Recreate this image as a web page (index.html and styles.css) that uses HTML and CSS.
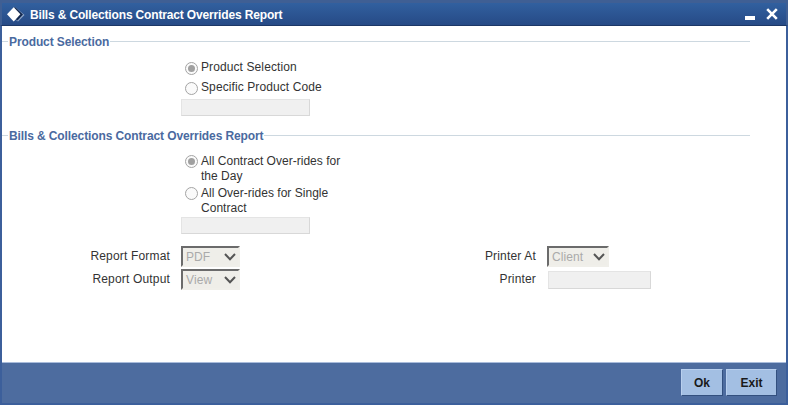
FILE: index.html
```html
<!DOCTYPE html>
<html lang="en">
<head>
<meta charset="utf-8">
<title>Bills &amp; Collections Contract Overrides Report</title>
<link rel="stylesheet" href="styles.css">
</head>
<body>
<div class="window">
  <header class="titlebar">
    <svg class="logo" width="18" height="16" viewBox="0 0 18 16"><path d="M8 0 17.5 8 11 14.5 1 7Z" fill="#8fa6c8"/><path d="M8 0 16 7.5 10.5 13.5 1 7Z" fill="#12284f"/><path d="M6.7 0.3 13.4 7.3 6.7 14.4 0 7.3Z" fill="#fff"/></svg>
    <h1 class="title">Bills &amp; Collections Contract Overrides Report</h1>
    <div class="winctl">
      <svg width="10" height="4" viewBox="0 0 10 4"><rect width="10" height="4" fill="#fff"/></svg>
      <svg width="12" height="12" viewBox="0 0 12 12"><path d="M1.2 1.2 10.8 10.8M10.8 1.2 1.2 10.8" stroke="#fff" stroke-width="2.6" fill="none"/></svg>
    </div>
  </header>
  <main class="body">
    <section class="group first">
      <div class="legend"><span class="legend-dash"></span><h2 class="legend-text">Product Selection</h2><span class="legend-line"></span></div>
      <div class="choices">
        <label class="radio one"><span class="dot on"></span><span>Product Selection</span></label>
        <label class="radio one"><span class="dot"></span><span>Specific Product Code</span></label>
        <div class="field wide"></div>
      </div>
    </section>
    <section class="group second">
      <div class="legend"><span class="legend-dash"></span><h2 class="legend-text">Bills &amp; Collections Contract Overrides Report</h2><span class="legend-line"></span></div>
      <div class="choices tight">
        <label class="radio"><span class="dot on"></span><span>All Contract Over-rides for the Day</span></label>
        <label class="radio"><span class="dot"></span><span>All Over-rides for Single Contract</span></label>
        <div class="field wide"></div>
      </div>
    </section>
    <section class="form">
      <span class="lbl">Report Format</span>
      <div class="select"><span>PDF</span><svg width="12" height="8" viewBox="0 0 12 8"><path d="M1 1 6 6.2 11 1" stroke="#555" stroke-width="2" fill="none"/></svg></div>
      <span class="lbl">Printer At</span>
      <div class="select short"><span>Client</span><svg width="12" height="8" viewBox="0 0 12 8"><path d="M1 1 6 6.2 11 1" stroke="#555" stroke-width="2" fill="none"/></svg></div>
      <span class="lbl">Report Output</span>
      <div class="select"><span>View</span><svg width="12" height="8" viewBox="0 0 12 8"><path d="M1 1 6 6.2 11 1" stroke="#555" stroke-width="2" fill="none"/></svg></div>
      <span class="lbl">Printer</span>
      <div class="field narrow"></div>
    </section>
  </main>
  <footer class="footer">
    <button class="btn ok" type="button">Ok</button>
    <button class="btn exit" type="button">Exit</button>
  </footer>
</div>
</body>
</html>
```
FILE: styles.css
```css
* { box-sizing: border-box; }
html, body { margin: 0; padding: 0; }
body { width: 788px; height: 405px; overflow: hidden; font-family: "Liberation Sans", Arial, sans-serif; font-size: 12px; letter-spacing: 0.1px; color: #333; background: #fff; }
.window { width: 788px; height: 405px; display: flex; flex-direction: column; background: #3c5f9b; }
.titlebar { height: 26px; flex: none; display: flex; align-items: center; padding: 1px 8px 0 5px; border: 2px solid #3f5f94; border-top-width: 3px; border-bottom: 1px solid #1c3766; background: linear-gradient(#31609f, #264a86); color: #fff; }
.logo { flex: none; }
.title { margin: 0 0 0 5px; font-size: 12px; font-weight: bold; letter-spacing: -0.155px; flex: 1; }
.winctl { display: flex; gap: 11px; align-items: flex-start; margin-top: -1px; }
.winctl svg:first-child { margin-top: 8px; }
.body { flex: none; height: 336px; margin: 0 2px; background: #fff; display: flex; flex-direction: column; }
.legend { display: flex; align-items: center; height: 16px; }
.legend-dash { width: 6px; height: 1px; background: #cdd8e0; flex: none; margin-bottom: 2px; }
.legend-text { margin: 0 1px; font-size: 12px; font-weight: bold; letter-spacing: -0.11px; color: #4a6a9f; white-space: nowrap; }
.legend-line { flex: 1; height: 1px; background: #cdd8e0; margin: 0 36px 2px 0; }
.first { padding-top: 8px; }
.second { padding-top: 12px; }
.choices { padding: 7px 0 0 179px; display: flex; flex-direction: column; }
.radio { display: flex; width: 170px; line-height: 15px; color: #333; }
.radio.one { height: 20px; align-items: center; line-height: 20px; }
.dot { flex: none; width: 13px; height: 13px; border: 1px solid #a4a4a4; border-radius: 50%; margin: 1px 3px 0 4px; background: #fafafa; position: relative; }
.radio.one .dot { margin-top: 2px; }
.dot.on::after { content: ""; position: absolute; left: 2px; top: 2px; width: 7px; height: 7px; border-radius: 50%; background: #a0a0a0; }
.field { background: #f0f0f0; border: 1px solid #e4e4e4; border-right-color: #d8d8d8; border-bottom-color: #d8d8d8; height: 17px; }
.wide { width: 129px; margin-top: 2px; }
.tight { padding-top: 10px; letter-spacing: 0.02px; }
.tight .radio { margin-bottom: 2px; }
.tight .wide { margin-top: -1px; }
.form { display: grid; grid-template-columns: 168px 59px 285px 104px; grid-auto-rows: 23px; column-gap: 11px; margin-top: 11px; align-items: center; }
.lbl { text-align: right; color: #333; letter-spacing: 0.17px; padding-bottom: 1px; }
.select { width: 59px; height: 21px; display: flex; align-items: center; justify-content: space-between; padding: 1px 2px 0 3px; background: #efeee9; border: 2px solid #f0efea; border-top-color: #6b6b6b; border-left-color: #6b6b6b; color: #aaa; }
.short { width: 62px; }
.narrow { width: 103px; height: 18px; margin-left: 1px; }
.footer { flex: 1; margin: 0 2px 2px; border-top: 1px solid #a9bcdb; background: #4d6c9f; display: flex; justify-content: flex-end; align-items: flex-start; gap: 3px; padding: 6px 9px 0 0; }
.btn { height: 27px; padding: 0; font-family: inherit; font-size: 12px; font-weight: bold; color: #1a1a1a; background: #a3bfe3; border: 1px solid; border-color: #b8cfee #33507f #33507f #b8cfee; }
.ok { width: 42px; }
.exit { width: 51px; }
```
